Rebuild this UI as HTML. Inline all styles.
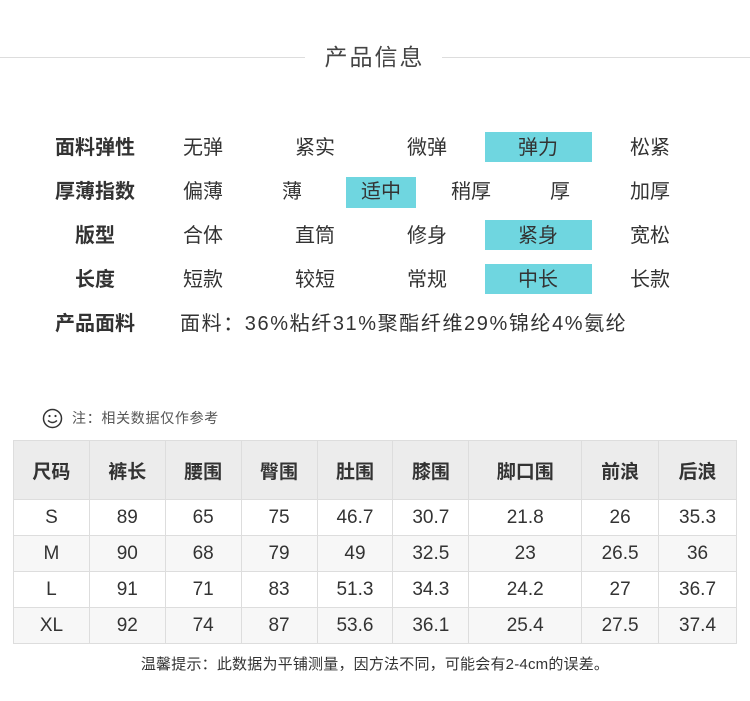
<!DOCTYPE html>
<html><head><meta charset="utf-8"><style>
*{margin:0;padding:0;box-sizing:border-box}
body{width:750px;height:701px;background:#fff;position:relative;font-family:"Liberation Sans","Noto Sans CJK SC",sans-serif;color:#333;overflow:hidden}
.line{position:absolute;top:57px;height:1px;background:#ddd}
.title{position:absolute;top:42px;left:305px;width:137px;text-align:center;font-size:23px;color:#444;line-height:30px;letter-spacing:2px;padding-left:2px}
.a{position:absolute;font-size:20px;line-height:30px;text-align:center;transform:translateX(-50%);white-space:nowrap}
.lab{font-weight:bold}
.hl{position:absolute;background:#6fd6e0}
table{position:absolute;left:13px;top:440px;border-collapse:collapse;width:724px}
td{border:1px solid #ddd;text-align:center;font-size:19px;height:36px;padding:0}
tr.h td{height:59px;background:#ececec;font-weight:bold;font-size:19px}
tr.g td{background:#f7f7f7}
.note{position:absolute;left:72px;top:408px;font-size:14px;color:#555;line-height:20px;letter-spacing:0.7px}
.foot{position:absolute;left:0;width:750px;top:655px;text-align:center;font-size:15px;line-height:20px;letter-spacing:0.2px}
</style></head><body>
<div class="line" style="left:0;width:305px"></div>
<div class="line" style="left:442px;width:308px"></div>
<div class="title">产品信息</div>

<div class="hl" style="left:485px;top:132px;width:107px;height:30px"></div>
<div class="hl" style="left:346px;top:177px;width:70px;height:31px"></div>
<div class="hl" style="left:485px;top:220px;width:107px;height:30px"></div>
<div class="hl" style="left:485px;top:264px;width:107px;height:30px"></div>

<div class="a lab" style="left:95px;top:133px">面料弹性</div>
<div class="a" style="left:203px;top:133px">无弹</div>
<div class="a" style="left:315px;top:133px">紧实</div>
<div class="a" style="left:427px;top:133px">微弹</div>
<div class="a" style="left:538px;top:133px">弹力</div>
<div class="a" style="left:650px;top:133px">松紧</div>

<div class="a lab" style="left:95px;top:177px">厚薄指数</div>
<div class="a" style="left:203px;top:177px">偏薄</div>
<div class="a" style="left:292px;top:177px">薄</div>
<div class="a" style="left:381px;top:177px">适中</div>
<div class="a" style="left:471px;top:177px">稍厚</div>
<div class="a" style="left:560px;top:177px">厚</div>
<div class="a" style="left:650px;top:177px">加厚</div>

<div class="a lab" style="left:95px;top:221px">版型</div>
<div class="a" style="left:203px;top:221px">合体</div>
<div class="a" style="left:315px;top:221px">直筒</div>
<div class="a" style="left:427px;top:221px">修身</div>
<div class="a" style="left:538px;top:221px">紧身</div>
<div class="a" style="left:650px;top:221px">宽松</div>

<div class="a lab" style="left:95px;top:265px">长度</div>
<div class="a" style="left:203px;top:265px">短款</div>
<div class="a" style="left:315px;top:265px">较短</div>
<div class="a" style="left:427px;top:265px">常规</div>
<div class="a" style="left:538px;top:265px">中长</div>
<div class="a" style="left:650px;top:265px">长款</div>

<div class="a lab" style="left:95px;top:309px">产品面料</div>
<div class="a" style="left:180px;top:309px;transform:none;text-align:left;letter-spacing:1.6px">面料：36%粘纤31%聚酯纤维29%锦纶4%氨纶</div>

<svg style="position:absolute;left:42px;top:408px" width="21" height="21" viewBox="0 0 21 21"><circle cx="10.5" cy="10.5" r="9" fill="none" stroke="#333" stroke-width="1.5"/><circle cx="7.5" cy="8" r="1.1" fill="#333"/><circle cx="13.5" cy="8" r="1.1" fill="#333"/><path d="M6 12.5 Q10.5 16.5 15 12.5" fill="none" stroke="#333" stroke-width="1.4"/></svg>
<div class="note">注：相关数据仅作参考</div>

<table>
<colgroup><col style="width:76px"><col style="width:76px"><col style="width:76px"><col style="width:76px"><col style="width:76px"><col style="width:76px"><col style="width:113px"><col style="width:77px"><col style="width:78px"></colgroup>
<tr class="h"><td>尺码</td><td>裤长</td><td>腰围</td><td>臀围</td><td>肚围</td><td>膝围</td><td>脚口围</td><td>前浪</td><td>后浪</td></tr>
<tr><td>S</td><td>89</td><td>65</td><td>75</td><td>46.7</td><td>30.7</td><td>21.8</td><td>26</td><td>35.3</td></tr>
<tr class="g"><td>M</td><td>90</td><td>68</td><td>79</td><td>49</td><td>32.5</td><td>23</td><td>26.5</td><td>36</td></tr>
<tr><td>L</td><td>91</td><td>71</td><td>83</td><td>51.3</td><td>34.3</td><td>24.2</td><td>27</td><td>36.7</td></tr>
<tr class="g"><td>XL</td><td>92</td><td>74</td><td>87</td><td>53.6</td><td>36.1</td><td>25.4</td><td>27.5</td><td>37.4</td></tr>
</table>
<div class="foot">温馨提示：此数据为平铺测量，因方法不同，可能会有2-4cm的误差。</div>
</body></html>
